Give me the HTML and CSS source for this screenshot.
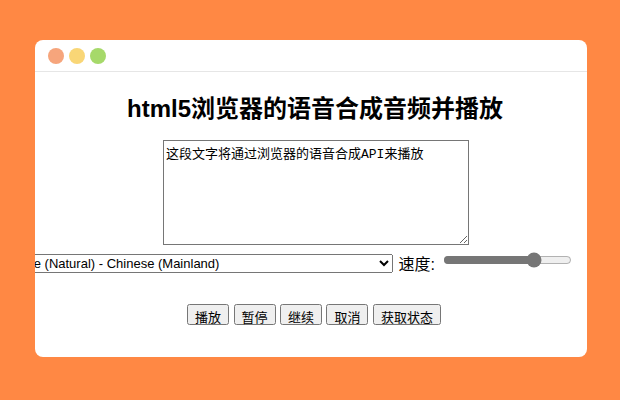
FILE: index.html
```html
<!DOCTYPE html>
<html lang="zh-CN">
<head>
  <meta charset="UTF-8">
  <title>html5浏览器的语音合成音频并播放</title>
  <link rel="stylesheet" href="styles.css">
</head>
<body>
<div class="page">
  <div class="window">
    <div class="titlebar">
      <span class="dot red"></span>
      <span class="dot yellow"></span>
      <span class="dot green"></span>
    </div>
    <div class="content">
      <h1>html5浏览器的语音合成音频并播放</h1>
      <div class="text-row">
        <textarea class="speech-text" rows="6" cols="40">这段文字将通过浏览器的语音合成API来播放</textarea>
      </div>
      <div class="voice-row">
        <select class="voice-select">
          <option>Microsoft Xiaoxiao Online (Natural) - Chinese (Mainland)</option>
        </select>
        <label class="rate-label">速度:</label>
        <input class="rate" type="range" min="0.1" max="2" step="0.1" value="1.5">
      </div>
      <div class="buttons">
        <button>播放</button>
        <button>暂停</button>
        <button>继续</button>
        <button>取消</button>
        <button>获取状态</button>
      </div>
    </div>
  </div>
</div>
</body>
</html>
```

FILE: styles.css
```css
body{
  margin: 0;
  padding: 0;
  background: #ff8844;
  font-family: "Liberation Sans", "Noto Sans CJK SC", sans-serif;
}

.page{
  width: 620px;
  height: 400px;
  box-sizing: border-box;
  padding: 40px 33px 0 35px;
}

.window{
  width: 552px;
  height: 317px;
  background: #fff;
  border-radius: 8px;
  overflow: hidden;
}

.titlebar{
  display: flex;
  align-items: center;
  gap: 5px;
  height: 31px;
  padding-left: 13px;
  border-bottom: 1px solid #e6e6e6;
}

.dot{
  width: 16px;
  height: 16px;
  border-radius: 50%;
}
.red{ background: #f6a57c; }
.yellow{ background: #f9d676; }
.green{ background: #a6d96a; }

.content{
  text-align: center;
}

h1{
  margin: 17px 0 0;
  padding-left: 8px;
  font-family: "Liberation Sans", "Noto Sans CJK SC", sans-serif;
  font-size: 24px;
  font-weight: bold;
  color: #000;
}

.text-row{
  margin-top: 16px;
  padding-left: 10px;
}

.speech-text{
  width: 306px;
  height: 105px;
  box-sizing: border-box;
  padding: 2px;
  border: 1px solid #767676;
  font-family: "Liberation Mono", "Noto Sans CJK SC", monospace;
  font-size: 13px;
  resize: both;
  display: inline-block;
  vertical-align: top;
}

.voice-row{
  display: flex;
  justify-content: flex-end;
  align-items: center;
  margin-top: 6px;
  padding-right: 15px;
}

.voice-select{
  flex-shrink: 0;
  width: 504px;
  height: 19px;
  font-family: "Liberation Sans", "Noto Sans CJK SC", sans-serif;
  font-size: 13px;
}

.rate-label{
  flex-shrink: 0;
  white-space: nowrap;
  margin-left: 6px;
  font-size: 16px;
}

.rate{
  flex-shrink: 0;
  width: 129px;
  margin: 0 0 6px 8px;
  accent-color: #767676;
}

.buttons{
  margin-top: 29px;
  padding-left: 6px;
}

.buttons button{
  font-family: "Liberation Sans", "Noto Sans CJK SC", sans-serif;
  font-size: 13px;
  height: 21px;
  padding: 1px 6px;
}
```
